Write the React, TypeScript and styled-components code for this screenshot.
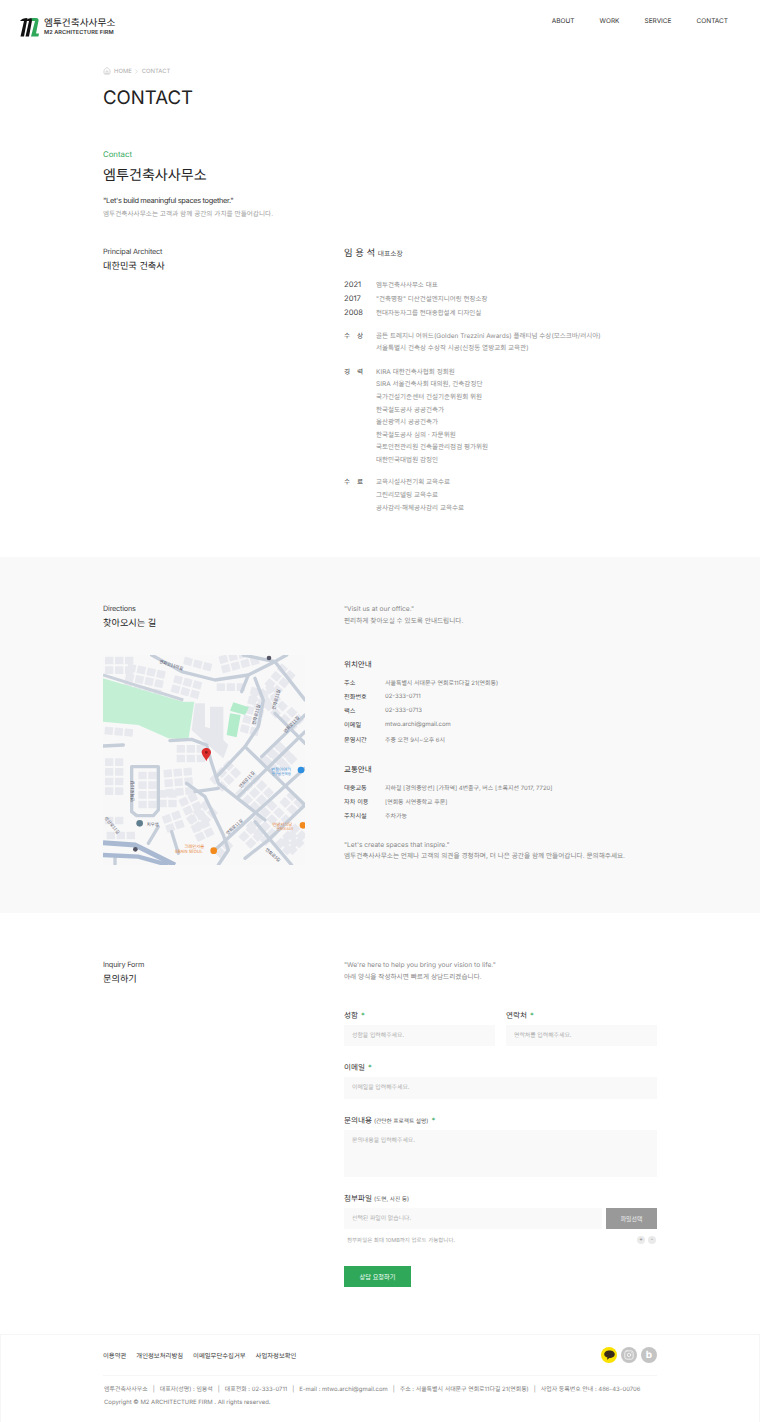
import styled, { createGlobalStyle } from 'styled-components';
import { Home, ChevronRight, Instagram } from 'lucide-react';

const GlobalStyle = createGlobalStyle`
  * { box-sizing: border-box; }
  body {
    margin: 0;
    background: #fff;
    color: #222;
    font-family: 'Inter', 'Noto Sans CJK KR', sans-serif;
    text-rendering: geometricPrecision;
  }
  p, h1, h2, h3, ul { margin: 0; padding: 0; }
`;

const Page = styled.div`
  width: 760px;
  height: 1422px;
  overflow: hidden;
  background: #fff;
`;

const Header = styled.header`
  height: 55px;
  padding: 14px 32px 0 20px;
  display: flex;
  justify-content: space-between;
  align-items: flex-start;
`;

const Logo = styled.div`
  display: flex;
  align-items: center;
  gap: 5px;
  margin-top: 4px;
`;

const LogoText = styled.div`
  display: flex;
  flex-direction: column;
`;

const LogoKo = styled.span`
  font-size: 9.7px;
  line-height: 12px;
  color: #222;
  white-space: nowrap;
`;

const LogoEn = styled.span`
  font-size: 5.6px;
  line-height: 7px;
  font-weight: 600;
  letter-spacing: 0.05px;
  color: #333;
  white-space: nowrap;
`;

const Nav = styled.nav`
  display: flex;
  gap: 25px;
  padding-top: 1px;
`;

const NavItem = styled.a`
  font-size: 6.5px;
  line-height: 12px;
  color: #333;
`;

const Wrap = styled.div`
  width: 554px;
  margin: 0 auto;
`;

const Breadcrumb = styled.div`
  display: flex;
  align-items: center;
  gap: 1.5px;
  height: 12px;
  margin-top: 10px;
  font-size: 5.9px;
  color: #aaa;
  svg { color: #999; }
  svg:first-child { margin-right: 1.5px; }
`;

const PageTitle = styled.h1`
  font-size: 18.6px;
  line-height: 26px;
  font-weight: 400;
  color: #222;
  margin-top: 8px;
`;

const Eyebrow = styled.p`
  margin-top: 38px;
  font-size: 7.8px;
  line-height: 10px;
  color: #2fa85a;
`;

const IntroTitle = styled.h2`
  margin-top: 7px;
  font-size: 14.1px;
  line-height: 20px;
  font-weight: 400;
  color: #222;
`;

const IntroQuote = styled.p`
  margin-top: 9px;
  font-size: 7.4px;
  line-height: 12px;
  letter-spacing: -0.33px;
  color: #333;
`;

const IntroText = styled.p`
  margin-top: 0;
  font-size: 6.65px;
  line-height: 14px;
  color: #a0a0a0;
`;

const Columns = styled.div<{ $top: number }>`
  display: grid;
  grid-template-columns: 241px 1fr;
  margin-top: ${(p) => p.$top}px;
`;

const SideLabel = styled.p`
  font-size: 7.3px;
  line-height: 12px;
  letter-spacing: -0.2px;
  color: #444;
`;

const SideTitle = styled.h3`
  margin-top: 1px;
  font-size: 9.2px;
  line-height: 15px;
  font-weight: 400;
  color: #222;
`;

const PersonName = styled.h3`
  font-size: 9.4px;
  line-height: 16px;
  font-weight: 400;
  color: #333;
  span {
    font-size: 6.8px;
    color: #555;
  }
`;

const Timeline = styled.div`
  margin-top: 15.85px;
`;

const YearRow = styled.div`
  display: flex;
  height: 14.3px;
  line-height: 14.3px;
`;

const Year = styled.span`
  width: 32px;
  font-size: 7.6px;
  color: #444;
`;

const RowText = styled.span`
  font-size: 6.5px;
  color: #909090;
  white-space: nowrap;
`;

const ProfileGroup = styled.div<{ $top: number }>`
  display: flex;
  margin-top: ${(p) => p.$top}px;
`;

const GroupLabel = styled.span`
  width: 32px;
  font-size: 6.6px;
  line-height: 12.65px;
  letter-spacing: 2.5px;
  color: #444;
`;

const GroupList = styled.ul`
  list-style: none;
  font-size: 6.55px;
  line-height: 12.65px;
  color: #909090;
  white-space: nowrap;
`;

const GreySection = styled.section`
  height: 356px;
  background: #f9f9f9;
  padding-top: 46px;
  margin-top: 43px;
`;

const SoftText = styled.p`
  font-size: 6.65px;
  line-height: 12px;
  color: #888;
  white-space: nowrap;
`;

const MapFrame = styled.div`
  width: 202px;
  height: 210px;
  svg { display: block; }
`;

const InfoTitle = styled.h3<{ $top?: number }>`
  font-size: 7.5px;
  line-height: 12px;
  font-weight: 400;
  color: #333;
  margin-top: ${(p) => p.$top ?? 0}px;
  margin-bottom: 4px;
`;

const InfoRow = styled.div`
  display: flex;
  height: 14.2px;
  align-items: center;
`;

const InfoLabel = styled.span`
  width: 41px;
  font-size: 6.2px;
  color: #444;
  white-space: nowrap;
`;

const InfoValue = styled.span`
  font-size: 5.95px;
  color: #808080;
  white-space: nowrap;
`;

const Closing = styled(SoftText)`
  margin-top: 17px;
  line-height: 11.6px;
`;

const FormSection = styled.section`
  height: 421px;
  padding-top: 46px;
`;

const Form = styled.form`
  margin-top: 25.6px;
  width: 313px;
`;

const FieldPair = styled.div`
  display: grid;
  grid-template-columns: 151px 151px;
  gap: 11px;
`;

const Field = styled.div<{ $top?: number }>`
  margin-top: ${(p) => p.$top ?? 0}px;
`;

const FieldLabel = styled.label`
  display: block;
  height: 14px;
  margin-bottom: 2px;
  font-size: 7.6px;
  line-height: 14px;
  color: #333;
  small {
    font-size: 5.7px;
    color: #555;
    margin-left: 2px;
  }
  em {
    font-style: normal;
    color: #2fa85a;
    margin-left: 3px;
  }
`;

const Control = styled.div<{ $h?: number }>`
  height: ${(p) => p.$h ?? 21.5}px;
  padding: 0 8px;
  background: #f9f9f9;
  font-size: 5.9px;
  line-height: 22px;
  color: #b0b0b0;
`;

const FileRow = styled.div`
  display: flex;
  gap: 4px;
`;

const FileBox = styled(Control)`
  flex: 1;
`;

const FileButton = styled.button`
  width: 51px;
  height: 21.5px;
  border: 0;
  padding: 0;
  background: #999;
  color: #eee;
  font-family: inherit;
  font-size: 5.9px;
`;

const NoteRow = styled.div`
  display: flex;
  justify-content: space-between;
  align-items: center;
  height: 14px;
  margin-top: 4px;
  padding: 0 1px 0 3px;
  font-size: 5.5px;
  color: #a5a5a5;
`;

const RoundButtons = styled.div`
  display: flex;
  gap: 3px;
`;

const RoundButton = styled.span`
  width: 8px;
  height: 8px;
  border-radius: 50%;
  background: #eaeaea;
  color: #888;
  font-size: 6px;
  line-height: 8px;
  text-align: center;
`;

const Submit = styled.button`
  display: block;
  width: 67px;
  height: 21px;
  margin-top: 19px;
  border: 0;
  padding: 0;
  background: #2fa85a;
  color: #f4fff8;
  font-family: inherit;
  font-size: 6.2px;
`;

const Footer = styled.footer`
  height: 89px;
  border: 1px solid #f6f6f6;
  padding-top: 10px;
`;

const FooterTop = styled.div`
  display: flex;
  justify-content: space-between;
  align-items: center;
  height: 20px;
`;

const FooterLinks = styled.div`
  display: flex;
  gap: 10px;
`;

const FooterLink = styled.a`
  font-size: 6.35px;
  color: #333;
`;

const Socials = styled.div`
  display: flex;
  gap: 4px;
`;

const Social = styled.span<{ $bg: string }>`
  display: flex;
  align-items: center;
  justify-content: center;
  width: 16px;
  height: 16px;
  border-radius: 50%;
  background: ${(p) => p.$bg};
  color: #fff;
  font-size: 10px;
  font-weight: 700;
`;

const FooterInfo = styled.div`
  margin-top: 10px;
  padding: 7px 0 0 1px;
  border-top: 1px solid #f6f6f6;
  font-size: 5.95px;
  line-height: 13px;
  color: #808080;
  white-space: nowrap;
  span { margin: 0 5px; color: #888; }
`;

const profile = [
  { label: '수 상', top: 9, items: ['골든 트레지니 어워드(Golden Trezzini Awards) 플래티넘 수상(모스크바/러시아)', '서울특별시 건축상 수상작 시공(신정동 열방교회 교육관)'] },
  {
    label: '경 력',
    top: 10.5,
    items: [
      'KIRA 대한건축사협회 정회원',
      'SIRA 서울건축사회 대의원, 건축감정단',
      '국가건설기준센터 건설기준위원회 위원',
      '한국철도공사 공공건축가',
      '울산광역시 공공건축가',
      '한국철도공사 심의 · 자문위원',
      '국토안전관리원 건축물관리점검 평가위원',
      '대한민국대법원 감정인',
    ],
  },
  { label: '수 료', top: 9.5, items: ['교육시설사전기획 교육수료', '그린리모델링 교육수료', '공사감리·해체공사감리 교육수료'] },
];

const years = [
  ['2021', '엠투건축사사무소 대표'],
  ['2017', '"건축명장" 디산건설엔지니어링 현장소장'],
  ['2008', '현대자동차그룹 현대종합설계 디자인실'],
];

const location = [
  ['주소', '서울특별시 서대문구 연희로11다길 21(연희동)'],
  ['전화번호', '02-333-0711'],
  ['팩스', '02-333-0713'],
  ['이메일', 'mtwo.archi@gmail.com'],
  ['운영시간', '주중 오전 9시~오후 6시'],
];

const transit = [
  ['대중교통', '지하철 [경의중앙선] [가좌역] 4번출구, 버스 [초록지선 7017, 7720]'],
  ['자차 이용', '[연희동 서연중학교 후문]'],
  ['주차시설', '주차가능'],
];

// 지도 블록: 시작점, 행/열 수, 회전각
const blocks = [
  { x: 30, y: 20, cols: 3, rows: 2, rot: 0 },
  { x: 100, y: 40, cols: 4, rows: 3, rot: 12 },
  { x: 240, y: 75, cols: 3, rows: 2, rot: 15 },
  { x: 270, y: 20, cols: 3, rows: 1, rot: 15 },
  { x: 370, y: 20, cols: 4, rows: 2, rot: -15 },
  { x: 365, y: 100, cols: 3, rows: 1, rot: 0 },
  { x: 560, y: 40, cols: 2, rows: 3, rot: 40 },
  { x: 530, y: 100, cols: 2, rows: 3, rot: 60 },
  { x: 590, y: 170, cols: 2, rows: 2, rot: 45 },
  { x: 30, y: 230, cols: 3, rows: 1, rot: 5 },
  { x: 30, y: 325, cols: 2, rows: 4, rot: 0 },
  { x: 130, y: 365, cols: 2, rows: 4, rot: 0 },
  { x: 205, y: 360, cols: 3, rows: 3, rot: -5 },
  { x: 245, y: 285, cols: 3, rows: 2, rot: 0 },
  { x: 190, y: 420, cols: 2, rows: 2, rot: 0 },
  { x: 30, y: 500, cols: 2, rows: 1, rot: 0 },
  { x: 35, y: 545, cols: 3, rows: 1, rot: 0 },
  { x: 200, y: 500, cols: 2, rows: 2, rot: -20 },
  { x: 250, y: 450, cols: 2, rows: 5, rot: -25 },
  { x: 330, y: 450, cols: 2, rows: 3, rot: 45 },
  { x: 470, y: 110, cols: 2, rows: 5, rot: 15 },
  { x: 540, y: 130, cols: 2, rows: 2, rot: 45 },
  { x: 490, y: 330, cols: 3, rows: 3, rot: -45 },
  { x: 560, y: 280, cols: 2, rows: 3, rot: 45 },
  { x: 400, y: 330, cols: 2, rows: 3, rot: 45 },
  { x: 420, y: 430, cols: 3, rows: 3, rot: -45 },
  { x: 530, y: 450, cols: 3, rows: 4, rot: 45 },
  { x: 590, y: 420, cols: 2, rows: 2, rot: 45 },
  { x: 430, y: 560, cols: 2, rows: 2, rot: -45 },
  { x: 360, y: 610, cols: 2, rows: 1, rot: -45 },
  { x: 540, y: 580, cols: 3, rows: 2, rot: -45 },
  { x: 590, y: 540, cols: 2, rows: 2, rot: 45 },
];

const roads = [
  'M170 15 L260 65 L360 90 L460 75 L530 40 L575 15',
  'M445 15 L540 35 L630 150',
  'M460 75 L440 125',
  'M480 85 L505 150 L490 230 L450 290 L365 380',
  'M225 272 L290 268 L335 285 L350 340 L370 400 L510 510',
  'M450 290 L630 465',
  'M540 190 L630 280',
  'M500 320 L630 195',
  'M430 440 L630 245',
  'M360 600 L480 490 L630 355',
  'M450 625 L520 570 L630 465',
  'M480 515 L590 645',
  'M110 350 H190 V480 L175 497 H125 L110 485 Z',
  'M275 400 L330 440 L385 555 L400 600 L370 645',
  'M300 425 L370 415',
  'M190 530 L160 580',
  'M230 545 L250 610',
  'M24 288 L85 285',
  'M60 625 V645',
];

const Pin = () => (
  <g transform="translate(334 294)">
    <path d="M0 0 C-9 0 -14 7 -14 13 C-14 22 -5 28 0 40 C5 28 14 22 14 13 C14 7 9 0 0 0 Z" fill="#dd2c2c" />
    <circle cx="0" cy="13" r="4" fill="#8e1616" />
  </g>
);

const RoadMap = () => (
  <svg width="202" height="210" viewBox="24 15 606 630" fontFamily="'Noto Sans CJK KR', sans-serif">
    <rect x="24" y="15" width="606" height="630" fill="#f8f8f9" />
    {blocks.map((b, i) => (
      <g key={i} transform={`translate(${b.x} ${b.y}) rotate(${b.rot})`} fill="#e8e9ee">
        {Array.from({ length: b.rows * b.cols }).map((_, n) => (
          <rect key={n} x={(n % b.cols) * 30} y={Math.floor(n / b.cols) * 29} width={25} height={23} rx={2} />
        ))}
      </g>
    ))}
    <path d="M24 85 L265 155 L298 155 L280 270 L220 265 L130 225 L24 215 Z" fill="#c3f0d5" />
    <path d="M415 157 L462 172 L450 195 L405 182 Z M405 190 L437 195 L425 262 L395 255 Z" fill="#b3eccb" />
    <path d="M300 160 H330 V230 L345 235 V170 H385 V270 L400 285 L385 325 L345 290 L290 240 Z" fill="#e6e7ed" />
    <path d="M24 75 L265 150" stroke="#ccd2dc" strokeWidth="9" fill="none" />
    {roads.map((d) => (
      <path key={d} d={d} stroke="#c5ced9" strokeWidth="10" fill="none" strokeLinecap="round" strokeLinejoin="round" />
    ))}
    <path d="M24 578 L120 585 L240 645" stroke="#a9b9d2" strokeWidth="15" fill="none" />
    <path d="M24 615 L130 620 L220 645" stroke="#a9b9d2" strokeWidth="13" fill="none" />
    <g fontSize="13" fill="#556">
      <text transform="translate(192 38) rotate(18)">연희로11마길</text>
      <text transform="translate(480 225) rotate(-75)">연희로11길</text>
      <text transform="translate(540 180) rotate(-75)">연희로11길</text>
      <text transform="translate(572 250) rotate(-48)">연희로11길</text>
      <text transform="translate(438 415) rotate(-48)">연희로11길</text>
      <text transform="translate(118 455) rotate(-90)">연희로11길</text>
      <text transform="translate(28 505) rotate(50)">성산로11길</text>
      <text transform="translate(398 555) rotate(-42)">연희로11길</text>
      <text transform="translate(510 600) rotate(42)">연희로5길</text>
      <text x="155" y="527">지우엠</text>
    </g>
    <text x="528" y="362" fontSize="13" fill="#3a8fd8">번칠이야기</text>
    <text x="530" y="375" fontSize="10" fill="#3a8fd8">연구원 연희점</text>
    <circle cx="618" cy="360" r="10" fill="#2f8fe0" />
    <text x="532" y="527" fontSize="13" fill="#e8873a">연남서식당</text>
    <text x="545" y="540" fontSize="10" fill="#e8873a">연희대 88지</text>
    <circle cx="624" cy="526" r="10" fill="#f28a1e" />
    <text x="268" y="595" fontSize="13" fill="#e8873a">그레인서울</text>
    <text x="240" y="610" fontSize="13" fill="#e8873a">GRAIN SEOUL</text>
    <circle cx="356" cy="602" r="10" fill="#f28a1e" />
    <circle cx="134" cy="520" r="10" fill="#5f7f8f" />
    <circle cx="522" cy="24" r="7" fill="#556" />
    <circle cx="121" cy="598" r="7" fill="#556" />
    <Pin />
  </svg>
);

const LogoMark = () => (
  <svg width="19" height="19" viewBox="0 0 19 19">
    <path d="M0 3 Q2 0 7.5 0 L4 18.5 H0.5 L4 3 Z" fill="#111" />
    <path d="M5.5 3 Q7.5 0 12.5 0 L9 18.5 H5.5 L9 3 Z" fill="#111" />
    <path d="M11.5 0 H16 Q19 0 18.5 3 L16 15.5 H19 L18.4 18.5 H11 L15 3 H12 Z" fill="#2fa85a" />
  </svg>
);

const KakaoIcon = () => (
  <svg width="11" height="10" viewBox="0 0 11 10">
    <path d="M5.5 0.5 C8.5 0.5 10.8 2.1 10.8 4.3 C10.8 6.5 8.5 8 5.5 8 L3 9.8 L3.4 7.6 C1.4 7 0.2 5.8 0.2 4.3 C0.2 2.1 2.5 0.5 5.5 0.5 Z" fill="#3a2a1a" />
  </svg>
);

export default function App() {
  return (
    <Page>
      <GlobalStyle />
      <Header>
        <Logo>
          <LogoMark />
          <LogoText>
            <LogoKo>엠투건축사사무소</LogoKo>
            <LogoEn>M2 ARCHITECTURE FIRM</LogoEn>
          </LogoText>
        </Logo>
        <Nav>
          <NavItem>ABOUT</NavItem>
          <NavItem>WORK</NavItem>
          <NavItem>SERVICE</NavItem>
          <NavItem>CONTACT</NavItem>
        </Nav>
      </Header>

      <Wrap>
        <Breadcrumb>
          <Home size={8} strokeWidth={1.2} />
          <span>HOME</span>
          <ChevronRight size={7} strokeWidth={1} />
          <span>CONTACT</span>
        </Breadcrumb>
        <PageTitle>CONTACT</PageTitle>
        <Eyebrow>Contact</Eyebrow>
        <IntroTitle>엠투건축사사무소</IntroTitle>
        <IntroQuote>"Let's build meaningful spaces together."</IntroQuote>
        <IntroText>엠투건축사사무소는 고객과 함께 공간의 가치를 만들어갑니다.</IntroText>

        <Columns $top={25}>
          <div>
            <SideLabel>Principal Architect</SideLabel>
            <SideTitle>대한민국 건축사</SideTitle>
          </div>
          <div>
            <PersonName>
              임 용 석 <span>대표소장</span>
            </PersonName>
            <Timeline>
              {years.map(([year, text]) => (
                <YearRow key={year}>
                  <Year>{year}</Year>
                  <RowText>{text}</RowText>
                </YearRow>
              ))}
            </Timeline>
            {profile.map((group) => (
              <ProfileGroup key={group.label} $top={group.top}>
                <GroupLabel>{group.label}</GroupLabel>
                <GroupList>
                  {group.items.map((item) => (
                    <li key={item}>{item}</li>
                  ))}
                </GroupList>
              </ProfileGroup>
            ))}
          </div>
        </Columns>
      </Wrap>

      <GreySection>
        <Wrap>
          <Columns $top={0}>
            <div>
              <SideLabel>Directions</SideLabel>
              <SideTitle>찾아오시는 길</SideTitle>
            </div>
            <div>
              <SoftText>"Visit us at our office."</SoftText>
              <SoftText>편리하게 찾아오실 수 있도록 안내드립니다.</SoftText>
            </div>
          </Columns>
          <Columns $top={24}>
            <MapFrame>
              <RoadMap />
            </MapFrame>
            <div>
              <InfoTitle $top={4}>위치안내</InfoTitle>
              {location.map(([label, value]) => (
                <InfoRow key={label}>
                  <InfoLabel>{label}</InfoLabel>
                  <InfoValue>{value}</InfoValue>
                </InfoRow>
              ))}
              <InfoTitle $top={18}>교통안내</InfoTitle>
              {transit.map(([label, value]) => (
                <InfoRow key={label}>
                  <InfoLabel>{label}</InfoLabel>
                  <InfoValue>{value}</InfoValue>
                </InfoRow>
              ))}
              <Closing>
                "Let's create spaces that inspire."
                <br />
                엠투건축사사무소는 언제나 고객의 의견을 경청하며, 더 나은 공간을 함께 만들어갑니다. 문의해주세요.
              </Closing>
            </div>
          </Columns>
        </Wrap>
      </GreySection>

      <FormSection>
        <Wrap>
          <Columns $top={0}>
            <div>
              <SideLabel>Inquiry Form</SideLabel>
              <SideTitle>문의하기</SideTitle>
            </div>
            <div>
              <SoftText>"We're here to help you bring your vision to life."</SoftText>
              <SoftText>아래 양식을 작성하시면 빠르게 상담드리겠습니다.</SoftText>
              <Form>
                <FieldPair>
                  <Field>
                    <FieldLabel>성함<em>*</em></FieldLabel>
                    <Control>성함을 입력해주세요.</Control>
                  </Field>
                  <Field>
                    <FieldLabel>연락처<em>*</em></FieldLabel>
                    <Control>연락처를 입력해주세요.</Control>
                  </Field>
                </FieldPair>
                <Field $top={15}>
                  <FieldLabel>이메일<em>*</em></FieldLabel>
                  <Control>이메일을 입력해주세요.</Control>
                </Field>
                <Field $top={15}>
                  <FieldLabel>문의내용<small>(간단한 프로젝트 설명)</small><em>*</em></FieldLabel>
                  <Control $h={47}>문의내용을 입력해주세요.</Control>
                </Field>
                <Field $top={15}>
                  <FieldLabel>첨부파일<small>(도면, 사진 등)</small></FieldLabel>
                  <FileRow>
                    <FileBox>선택된 파일이 없습니다.</FileBox>
                    <FileButton type="button">파일선택</FileButton>
                  </FileRow>
                  <NoteRow>
                    첨부파일은 최대 10MB까지 업로드 가능합니다.
                    <RoundButtons>
                      <RoundButton>+</RoundButton>
                      <RoundButton>-</RoundButton>
                    </RoundButtons>
                  </NoteRow>
                </Field>
                <Submit type="button">상담 요청하기</Submit>
              </Form>
            </div>
          </Columns>
        </Wrap>
      </FormSection>

      <Footer>
        <Wrap>
          <FooterTop>
            <FooterLinks>
              <FooterLink>이용약관</FooterLink>
              <FooterLink>개인정보처리방침</FooterLink>
              <FooterLink>이메일무단수집거부</FooterLink>
              <FooterLink>사업자정보확인</FooterLink>
            </FooterLinks>
            <Socials>
              <Social $bg="#fae100"><KakaoIcon /></Social>
              <Social $bg="#c4c4c4"><Instagram size={10} strokeWidth={1.8} /></Social>
              <Social $bg="#c4c4c4">b</Social>
            </Socials>
          </FooterTop>
          <FooterInfo>
            엠투건축사사무소<span>|</span>대표자(성명) : 임용석<span>|</span>대표전화 : 02-333-0711<span>|</span>E-mail : mtwo.archi@gmail.com<span>|</span>주소 : 서울특별시 서대문구 연희로11다길 21(연희동)<span>|</span>사업자 등록번호 안내 : 486-43-00706
            <br />
            Copyright © M2 ARCHITECTURE FIRM . All rights reserved.
          </FooterInfo>
        </Wrap>
      </Footer>
    </Page>
  );
}
